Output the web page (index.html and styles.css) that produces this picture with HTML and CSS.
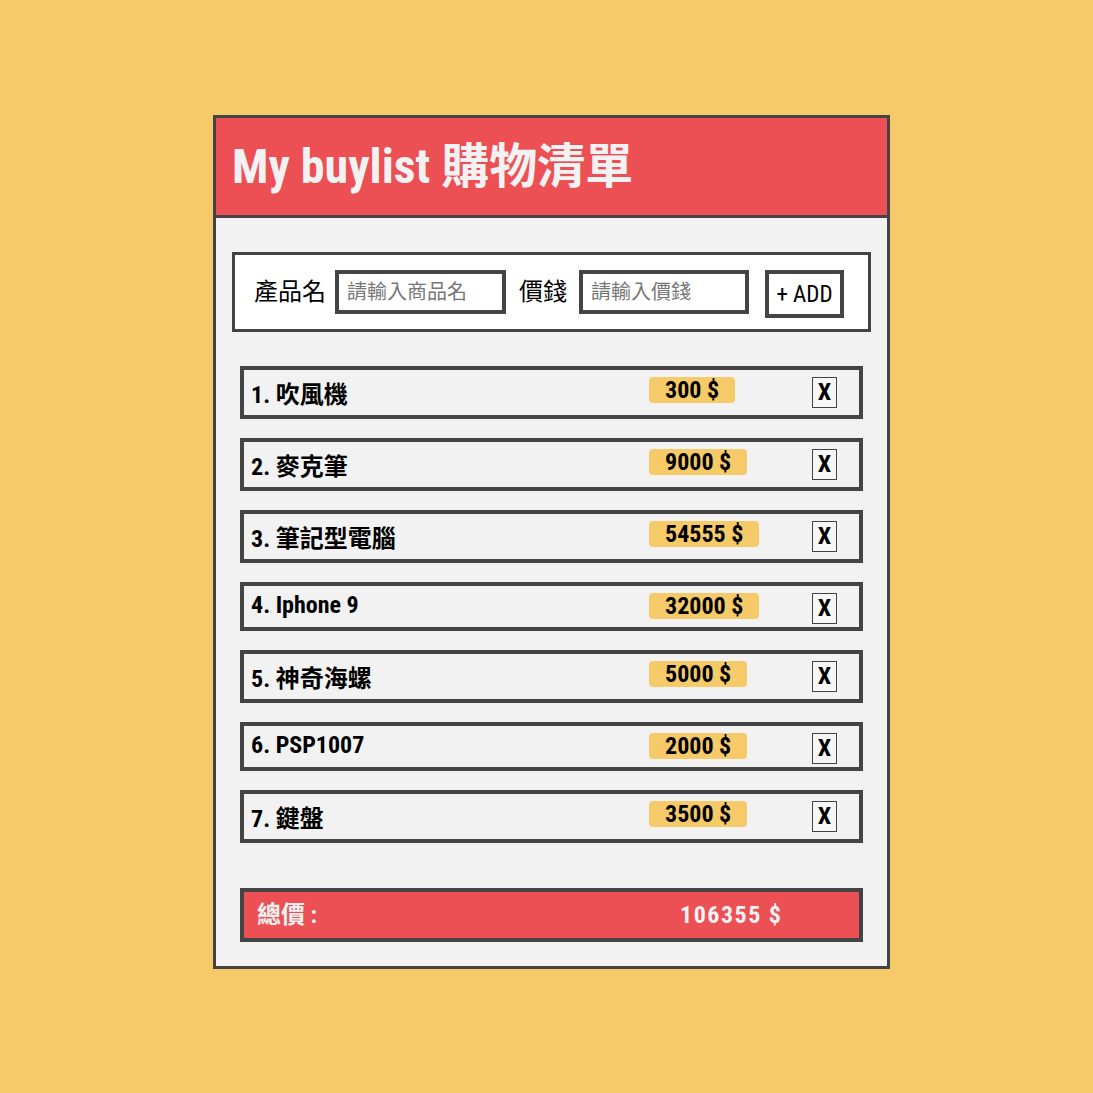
FILE: index.html
```html
<!DOCTYPE html>
<html lang="zh-Hant">
<head>
<meta charset="utf-8">
<title>My buylist</title>
<link rel="stylesheet" href="styles.css">
</head>
<body>
<div class="card">
  <h1 class="title">My buylist 購物清單</h1>
  <div class="content">
    <form class="form">
      <label class="label">產品名</label>
      <input class="field field-name" type="text" placeholder="請輸入商品名">
      <label class="label label-price">價錢</label>
      <input class="field field-price" type="text" placeholder="請輸入價錢">
      <button class="add" type="button">+ ADD</button>
    </form>
    <ul class="list">
      <li class="row"><span class="name">1. 吹風機</span><span class="price-cell"><span class="tag">300 $</span></span><button class="del" type="button">X</button></li>
      <li class="row"><span class="name">2. 麥克筆</span><span class="price-cell"><span class="tag">9000 $</span></span><button class="del" type="button">X</button></li>
      <li class="row"><span class="name">3. 筆記型電腦</span><span class="price-cell"><span class="tag">54555 $</span></span><button class="del" type="button">X</button></li>
      <li class="row"><span class="name">4. Iphone 9</span><span class="price-cell"><span class="tag">32000 $</span></span><button class="del" type="button">X</button></li>
      <li class="row"><span class="name">5. 神奇海螺</span><span class="price-cell"><span class="tag">5000 $</span></span><button class="del" type="button">X</button></li>
      <li class="row"><span class="name">6. PSP1007</span><span class="price-cell"><span class="tag">2000 $</span></span><button class="del" type="button">X</button></li>
      <li class="row"><span class="name">7. 鍵盤</span><span class="price-cell"><span class="tag">3500 $</span></span><button class="del" type="button">X</button></li>
    </ul>
    <div class="total"><span class="total-label">總價 :</span><span class="total-value">106355 $</span></div>
  </div>
</div>
</body>
</html>
```
FILE: styles.css
```css
html, body {
  margin: 0;
  padding: 0;
}
body {
  background: #f7ca69;
  font-family: "Roboto Condensed", Roboto, "Noto Sans CJK TC", sans-serif;
  font-stretch: condensed;
  color: #000;
}
.card {
  width: 671px;
  margin: 115px 0 0 213px;
  border: 3px solid #444;
  background: #f2f2f2;
}
.title {
  margin: 0;
  padding: 14px 16px;
  line-height: 69px;
  font-size: 48px;
  font-weight: 700;
  color: #f2f2f2;
  background: #ec5055;
  border-bottom: 3px solid #444;
}
.content {
  padding: 34px 0 24px;
}
.form {
  display: flex;
  align-items: flex-start;
  margin: 0 16px;
  padding: 15px 0 11px 19px;
  background: #fff;
  border: 3px solid #444;
}
.label {
  font-size: 24px;
  line-height: 44px;
  margin-right: 9px;
}
.label-price {
  margin-left: 13px;
  margin-right: 12px;
}
.field {
  box-sizing: border-box;
  height: 44px;
  border: 4px solid #444;
  padding: 0 8px;
  font-family: "Roboto", "Noto Sans CJK TC", sans-serif;
  font-size: 20px;
  background: #fff;
  outline: none;
}
.field::placeholder {
  color: #777;
}
.field-name {
  width: 171px;
}
.field-price {
  width: 170px;
}
.add {
  box-sizing: border-box;
  width: 79px;
  height: 48px;
  margin-left: 16px;
  border: 4px solid #444;
  background: #fff;
  padding: 0;
  font-family: inherit;
  font-stretch: condensed;
  font-size: 23px;
  color: #000;
}
.list {
  list-style: none;
  margin: 34px 24px 0;
  padding: 0;
}
.row {
  display: flex;
  align-items: flex-start;
  margin-bottom: 19px;
  padding: 5px 22px 5px 7px;
  border: 4px solid #444;
  background: #f2f2f2;
}
.name {
  flex: 1;
  min-height: 31px;
  font-size: 24px;
  font-weight: 700;
  line-height: normal;
}
.price-cell {
  width: 163px;
  height: 26px;
  padding-top: 2px;
}
.tag {
  display: inline-block;
  padding: 0 16px;
  line-height: 26px;
  font-size: 24px;
  font-weight: 700;
  background: #f7ca69;
  border-radius: 4px;
}
.del {
  box-sizing: border-box;
  width: 25px;
  height: 31px;
  margin-top: 2px;
  margin-bottom: -14px;
  padding: 0;
  border: 1px solid #444;
  background: #f6f6f6;
  font-family: inherit;
  font-stretch: condensed;
  font-size: 24px;
  font-weight: 700;
  line-height: 29px;
  color: #000;
}
.total {
  display: flex;
  margin: 45px 24px 0;
  padding-left: 13px;
  line-height: 46px;
  border: 4px solid #444;
  background: #ec5055;
  color: #f2f2f2;
  font-size: 24px;
  font-weight: 700;
}
.total-label {
  width: 423px;
}
.total-value {
  letter-spacing: 1.5px;
}
```
